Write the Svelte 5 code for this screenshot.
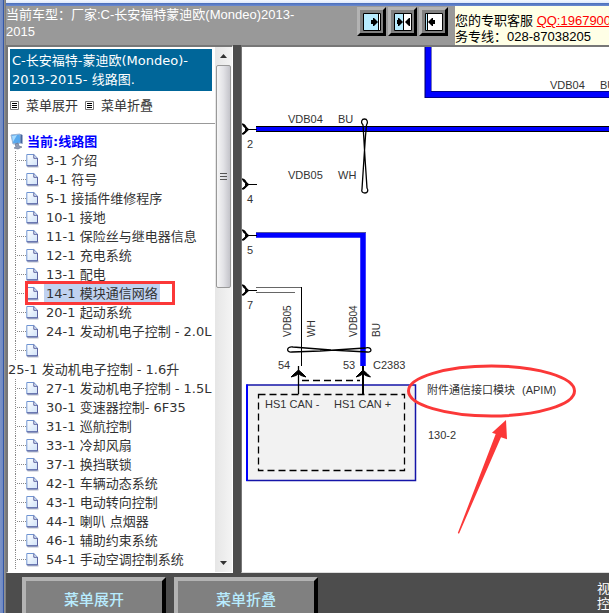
<script lang="ts">
  type Entry = { label: string; current?: boolean; wrapped?: boolean };

  const entries: Entry[] = [
    { label: '3-1 介绍' },
    { label: '4-1 符号' },
    { label: '5-1 接插件维修程序' },
    { label: '10-1 接地' },
    { label: '11-1 保险丝与继电器信息' },
    { label: '12-1 充电系统' },
    { label: '13-1 配电' },
    { label: '14-1 模块通信网络', current: true },
    { label: '20-1 起动系统' },
    { label: '24-1 发动机电子控制 - 2.0L' },
    { label: '25-1 发动机电子控制 - 1.6升', wrapped: true },
    { label: '27-1 发动机电子控制 - 1.5L' },
    { label: '30-1 变速器控制- 6F35' },
    { label: '31-1 巡航控制' },
    { label: '33-1 冷却风扇' },
    { label: '37-1 换挡联锁' },
    { label: '42-1 车辆动态系统' },
    { label: '43-1 电动转向控制' },
    { label: '44-1 喇叭 点烟器' },
    { label: '46-1 辅助约束系统' },
    { label: '54-1 手动空调控制系统' },
  ];

  const pins = [
    { n: '2', y: 129 },
    { n: '4', y: 184 },
    { n: '5', y: 235 },
    { n: '7', y: 290 },
  ];

  let selected = $state(7);
</script>

{#snippet pageIcon()}
  <svg class="page" width="13" height="15" viewBox="0 0 13 15" aria-hidden="true">
    <defs>
      <linearGradient id="paper" x1="0" y1="0" x2="1" y2="1">
        <stop offset="0" stop-color="#fff" />
        <stop offset="1" stop-color="#cfe2f8" />
      </linearGradient>
    </defs>
    <path d="M1.5 13.5h11" stroke="#b9bdcb" stroke-width="2" />
    <path d="M.8 1.5h7l3.7 3.7v7.6H.8z" fill="url(#paper)" stroke="#6f94d2" />
    <path d="M7.8 1.5v3.8h3.7v7.5H.8" fill="none" stroke="#5c629e" />
  </svg>
{/snippet}

{#snippet listIcon()}
  <svg width="9" height="9" viewBox="0 0 9 9" aria-hidden="true">
    <path d="M.5 .5h8v8h-8z" fill="#fff" stroke="#777" />
    <path d="M2 2.5h5M2 4.5h5M2 6.5h5" stroke="#000" />
  </svg>
{/snippet}

<div class="frame">
  <header>
    <p class="model">当前车型：厂家:C-长安福特蒙迪欧(Mondeo)2013-2015</p>
    <div class="tools">
      <button aria-label="展开左栏">
        <svg width="18" height="18" viewBox="0 0 18 18">
          <path d="M.5 .5h17v17H.5z" fill="#fff" stroke="#000" />
          <path d="M1 1h14v16H1z" fill="#b8ecff" />
          <path d="M15.5 1v16" stroke="#000" />
          <path d="M8 7h2V5h1l4 4-4 4h-1v-2H8z" />
        </svg>
      </button>
      <button aria-label="左右均分">
        <svg width="18" height="18" viewBox="0 0 18 18">
          <path d="M.5 .5h17v17H.5z" fill="#fff" stroke="#000" />
          <path d="M1 1h8v16H1z" fill="#b8ecff" />
          <path d="M9.5 1v16" stroke="#000" />
          <path d="M3 7h1V5h1l4 4-4 4H4v-2H3zM16 7V5h-1l-4 4 4 4h1z" />
        </svg>
      </button>
      <button aria-label="收起左栏">
        <svg width="18" height="18" viewBox="0 0 18 18">
          <path d="M.5 .5h17v17H.5z" fill="#fff" stroke="#000" />
          <path d="M1 1h1v16H1z" fill="#b8ecff" />
          <path d="M2.500 1v16" stroke="#000" />
          <path d="M10 7H8V5H7L3 9l4 4h1v-2h2z" />
        </svg>
      </button>
    </div>
    <div class="contact">
      <div>您的专职客服 <a href="#qq">QQ:1967900</a></div>
      <div>务专线：028-87038205</div>
    </div>
  </header>

  <main>
    <nav>
      <div class="menu">
        <h1>C-长安福特-蒙迪欧(Mondeo)-<br />2013-2015- 线路图.</h1>
        <div class="fold">
          {@render listIcon()}<button>菜单展开</button>
          {@render listIcon()}<button>菜单折叠</button>
        </div>
        <div class="root">
          <svg width="14" height="17" viewBox="0 0 14 17" aria-hidden="true">
            <path d="M1 2l9-1 1 9-8 1z" fill="#58a9ee" stroke="#9db4d2" />
            <path d="M2 3l5-1-4 7z" fill="#a8dcff" />
            <path d="M10.5 1l2 1v9l-2-1z" fill="#44659f" />
            <path d="M5 11l3-1 1 3 3 1-4 2-4-1 2-1z" fill="#8e9bb4" stroke="#5c6b8c" stroke-width=".6" />
          </svg>
          <a href="#root">当前:线路图</a>
        </div>
        <ul>
          {#each entries as entry, i}
            <li class:wrapped={entry.wrapped}>
              <span class="branch">{@render pageIcon()}</span>
              <a
                href="#s{i}"
                class:selected={selected === i}
                onclick={() => (selected = i)}>{entry.label}</a>
              {#if entry.current}<span class="mark"></span>{/if}
            </li>
          {/each}
        </ul>
      </div>
      <div class="scroll" aria-hidden="true">
        <svg class="tip" width="7" height="4" viewBox="0 0 7 4"><path d="M0 4l3.5-4L7 4z" fill="#333" /></svg>
        <div class="thumb"><i></i><i></i><i></i></div>
        <svg class="tip" width="7" height="4" viewBox="0 0 7 4"><path d="M0 0l3.5 4L7 0z" fill="#333" /></svg>
      </div>
    </nav>

    <section class="sheet">
      <svg class="diagram" width="367" height="525" viewBox="242 47 367 525">
        <!-- feed from the top -->
        <path d="M428 47v47.5h181" fill="none" stroke="#00006a" stroke-width="7" />
        <path d="M428.3 47v47.5h181" fill="none" stroke="#00f" stroke-width="5.5" />
        <text x="550" y="89">VDB04</text>
        <text x="600" y="89">BU</text>

        <!-- pin 2 -->
        <path d="M256 129h353" stroke="#000" stroke-width="6" />
        <path d="M256 129h353" stroke="#00f" stroke-width="4" />
        <text x="288" y="123">VDB04</text>
        <text x="338" y="123">BU</text>
        <text x="288" y="179">VDB05</text>
        <text x="338" y="179">WH</text>

        <!-- pin 5 -->
        <path d="M256 235h107v131" fill="none" stroke="#00f" stroke-width="5.5" />
        <path d="M256 232.5h110" stroke="#5555a0" />

        <!-- pin 7 -->
        <path d="M256 287.5h45.5" stroke="#666" />
        <path d="M256 292.5h39" stroke="#666" />
        <path d="M301.5 287v79" stroke="#000" />

        {#each pins as pin}
          <path d="M242 {pin.y - 5}q4 1 4 5t-4 5" fill="none" stroke="#000" stroke-width="1.5" />
          <path d="M243 {pin.y - 4}l5 4.5-5 4.5" fill="none" stroke="#000" stroke-width="1.8" />
          <path d="M245 {pin.y + 0.5}h12" stroke="#000" />
          <text x="247" y={pin.y + 19}>{pin.n}</text>
        {/each}

        <!-- twisted pair markers -->
        <g fill="none" stroke="#000" stroke-width="1.3">
          <path d="M363 125c-3-3-1-6 1.5-6s4 3 2 6l-1 11-1.500 22-2 31c-1 3 1 4 3 4s4-2 2-5l-2-30-1.500-25z" />
          <path d="M293 347c-7-1-7 6-1 5l28-1 45-3c7-2 8 5 2 4l-36-2z" />
        </g>

        <g class="small">
          <text transform="translate(291 337) rotate(-90)">VDB05</text>
          <text transform="translate(315 337) rotate(-90)">WH</text>
          <text transform="translate(357 337) rotate(-90)">VDB04</text>
          <text transform="translate(380 337) rotate(-90)">BU</text>
        </g>

        <!-- APIM module -->
        <path d="M247 385h168.500v95.500H247z" fill="#f2f2f2" stroke="#1414a8" stroke-width="1.5" />
        <path d="M247 384.500v96.500" stroke="#00f" stroke-width="2" />
        <path d="M258.500 394.500h146v76h-146z" fill="none" stroke="#000" stroke-width="1.3" stroke-dasharray="7 4" />
        <path d="M302 380.500h58" stroke="#000" stroke-width="1.5" stroke-dasharray="7 4" />
        <path d="M298.500 366v28" stroke="#000" stroke-width="1.3" />
        <path d="M363 366v28" stroke="#000" stroke-width="2" />
        <path d="M291 377l3-3 4.500-4 4.500 4 3 3-5-1.500-2.500-2-2.500 2zM356 377l3-3 4-4 4.500 4 3 3-5-1.500-2.500-2-2.500 2z" stroke="#000" />
        <text x="278" y="369">54</text>
        <text x="343" y="369">53</text>
        <text x="373" y="369">C2383</text>
        <text x="265" y="408">HS1 CAN -</text>
        <text x="334" y="408">HS1 CAN +</text>
        <text x="427" y="394">附件通信接口模块</text>
        <text x="522" y="394">(APIM)</text>
        <text x="428" y="439">130-2</text>

        <ellipse cx="491.5" cy="391" rx="83" ry="25" fill="none" stroke="#fb3838" stroke-width="3" />
        <path d="M506 420l1 19.300-6-2L459 533.700l-1.200-.7 37.900-99-3.700-1.300z" fill="#fb3838" />
      </svg>
    </section>
  </main>

  <footer>
    <button>菜单展开</button>
    <button>菜单折叠</button>
    <span class="note">视<br />控</span>
  </footer>
</div>

<style>
  :global(body) {
    margin: 0;
    overflow: hidden;
  }
  .frame {
    box-sizing: border-box;
    height: 100vh;
    display: flex;
    flex-direction: column;
    padding: 6px 0 0 6px;
    background:
      linear-gradient(#f4f8ff, #dfe9fb 3px, #4a6dba 3px, #6a8ad0 6px, transparent 6px) 6px 0 / 100% 6px no-repeat,
      linear-gradient(90deg, #7c93c6, #6d88c4 3px, #3557a5 3px, #3557a5 4px, #999 4px, #777 6px);
    font-family: "Liberation Sans", "Noto Sans CJK SC", sans-serif;
    font-size: 13px;
  }

  header {
    height: 39px;
    flex: none;
    display: flex;
    background: #999;
  }
  .model {
    flex: 1;
    margin: 0;
    padding-right: 60px;
    color: #fff;
    line-height: 17px;
    overflow-wrap: anywhere;
  }
  .tools {
    display: flex;
    gap: 2px;
    align-items: flex-start;
    padding: 1px 7px 0 0;
  }
  .tools button {
    width: 29px;
    height: 29px;
    padding: 2px;
    display: grid;
    place-items: center;
    background: #808080;
    border: 3px solid;
    border-color: #b3b3b3 #000 #000 #b3b3b3;
  }
  .contact {
    width: 154px;
    box-sizing: border-box;
    padding-top: 7px;
    background: #ffffe6;
    line-height: 16px;
    white-space: nowrap;
  }
  .contact a { color: #f00; }

  main {
    flex: 1;
    min-height: 0;
    display: flex;
    gap: 8px;
    background: #4d4d4d;
  }
  nav {
    width: 227px;
    box-sizing: border-box;
    flex: none;
    display: flex;
    background: #fff;
    border: 1px solid #777;
    border-width: 2px 1px 1px 2px;
    border-right-color: #fff;
    border-bottom-color: #fff;
  }
  .menu {
    flex: 1;
    min-width: 0;
    overflow: hidden;
    color: #333;
    font-family: "DejaVu Sans", "Noto Sans CJK SC", sans-serif;
    line-height: 19px;
    white-space: nowrap;
  }
  h1 {
    margin: 2px 3px 0 2px;
    padding: 2px;
    background: #069;
    color: #fff;
    font-size: 13px;
    font-weight: 400;
  }
  .fold {
    display: flex;
    align-items: center;
    gap: 7px;
    height: 33px;
    padding: 0 2px 4px;
    margin-bottom: 8px;
    border-bottom: 1px solid #999;
    box-sizing: border-box;
  }
  .fold button {
    padding: 0;
    border: 0;
    background: none;
    color: inherit;
    font: inherit;
  }
  .root {
    display: flex;
    align-items: center;
    gap: 3px;
    height: 19px;
    padding-left: 2px;
  }
  .root a {
    color: #00f;
    font-weight: 700;
    text-decoration: none;
  }
  ul {
    margin: 0;
    padding: 0;
    list-style: none;
  }
  li {
    position: relative;
    display: flex;
    height: 19px;
  }
  .branch {
    width: 36px;
    flex: none;
    display: flex;
    align-items: center;
    padding-left: 18px;
    box-sizing: border-box;
    background:
      repeating-linear-gradient(#888 0 1px, transparent 1px 2px) 7px 0 / 1px 100% no-repeat,
      repeating-linear-gradient(90deg, #888 0 1px, transparent 1px 2px) 9px 9px / 9px 1px no-repeat;
  }
  li a {
    padding: 0 2px;
    color: inherit;
    text-decoration: none;
  }
  li a.selected { background: #c0d2f0; }
  .wrapped {
    height: 38px;
    flex-direction: column;
  }
  .wrapped .branch { height: 19px; }
  .wrapped a { padding: 0; }
  .mark {
    position: absolute;
    left: 17px;
    top: -3px;
    width: 144px;
    height: 18px;
    border: 3px solid #fb3838;
  }

  .scroll {
    width: 17px;
    flex: none;
    display: flex;
    flex-direction: column;
    align-items: center;
    background: linear-gradient(90deg, #e6e6e6, #f4f4f4);
  }
  .tip { margin: 7px 0; }
  .thumb {
    width: 13px;
    height: 221px;
    margin-bottom: auto;
    display: flex;
    flex-direction: column;
    justify-content: center;
    align-items: center;
    gap: 2px;
    border: 1px solid #999;
    border-radius: 2px;
    background: linear-gradient(90deg, #f6f6f6, #e2e2e6 50%, #c4c4ca);
  }
  .thumb i {
    width: 7px;
    height: 1px;
    background: #555;
  }

  .sheet {
    flex: 1;
    min-width: 0;
    overflow: hidden;
    background: #fff;
    border-top: 2px solid #777;
    border-left: 1px solid #777;
    border-bottom: 1px solid #ddd;
  }
  .diagram { display: block; }
  .diagram text {
    font-size: 11px;
    fill: #333;
  }
  .diagram .small text { font-size: 10px; }

  footer {
    height: 40px;
    flex: none;
    display: flex;
    gap: 8px;
    padding: 4px 0 0 16px;
    box-sizing: border-box;
    overflow: hidden;
    background: #4d4d4d;
  }
  footer button {
    width: 144px;
    height: 42px;
    flex: none;
    padding: 0;
    background: #808080;
    border: 4px solid;
    border-color: #b3b3b3 #000 #000 #b3b3b3;
    color: #b8ecff;
    font: 500 15px "Noto Sans CJK SC", sans-serif;
  }
  .note {
    width: 12px;
    margin-left: auto;
    padding-top: 4px;
    color: #fff;
    line-height: 15px;
  }
</style>
